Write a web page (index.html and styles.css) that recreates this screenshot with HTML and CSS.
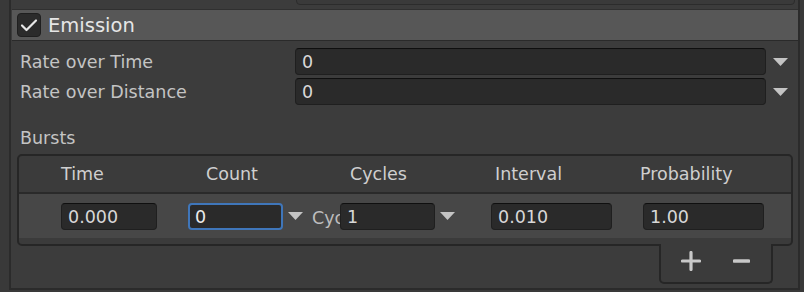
FILE: index.html
```html
<!DOCTYPE html>
<html lang="en">
<head>
  <meta charset="UTF-8">
  <title>Emission</title>
  <link rel="stylesheet" href="styles.css">
</head>
<body>
  <div class="panel">
    <div class="prev-row">
      <div class="prev-field"></div>
    </div>

    <div class="module-header">
      <span class="toggle">
        <svg width="24" height="24" viewBox="0 0 24 24"><polyline points="5,12.5 9.5,17 19,7.5" fill="none" stroke="#e8e8e8" stroke-width="2.2" stroke-linecap="round" stroke-linejoin="round"/></svg>
      </span>
      <span class="module-title">Emission</span>
    </div>

    <div class="fields">
      <div class="field-row">
        <span class="field-label">Rate over Time</span>
        <div class="input wide">0</div>
        <svg class="arrow" width="15" height="8" viewBox="0 0 15 8"><polygon points="0,0 15,0 7.5,8" fill="#c4c4c4"/></svg>
      </div>
      <div class="field-row">
        <span class="field-label">Rate over Distance</span>
        <div class="input wide">0</div>
        <svg class="arrow" width="15" height="8" viewBox="0 0 15 8"><polygon points="0,0 15,0 7.5,8" fill="#c4c4c4"/></svg>
      </div>
    </div>

    <div class="bursts-label">Bursts</div>

    <div class="bursts">
      <div class="bursts-head">
        <span class="col">Time</span>
        <span class="col col-count">Count</span>
        <span class="col">Cycles</span>
        <span class="col">Interval</span>
        <span class="col">Probability</span>
      </div>
      <div class="bursts-row">
        <div class="input cell-time">0.000</div>
        <div class="input cell-count focused">0</div>
        <svg class="arrow small" width="15" height="8" viewBox="0 0 15 8"><polygon points="0,0 15,0 7.5,8" fill="#c4c4c4"/></svg>
        <span class="clipped-label">Cycles</span>
        <div class="input cell-cycles">1</div>
        <svg class="arrow small" width="15" height="8" viewBox="0 0 15 8"><polygon points="0,0 15,0 7.5,8" fill="#c4c4c4"/></svg>
        <div class="input cell-interval">0.010</div>
        <div class="input cell-prob">1.00</div>
      </div>
      <div class="bursts-foot"></div>
    </div>

    <div class="list-buttons">
      <svg width="20" height="20" viewBox="0 0 20 20"><path d="M10 1.5v17M1.5 10h17" stroke="#c8c8c8" stroke-width="3.2" stroke-linecap="round"/></svg>
      <svg class="minus" width="17" height="20" viewBox="0 0 17 20"><path d="M1.5 10h14" stroke="#c8c8c8" stroke-width="3.6" stroke-linecap="round"/></svg>
    </div>
  </div>
</body>
</html>
```

FILE: styles.css
```css
:root {
  --color-outer: #393939;
  --color-panel: #3c3c3c;
  --color-line: #262626;
  --color-header: #575757;
  --color-field: #2a2a2a;
  --color-label: #c4c4c4;
  --color-text: #d8d8d8;
  --color-focus: #3f76ba;
}

body {
  margin: 0;
  background-color: var(--color-outer);
  font-family: "DejaVu Sans", Verdana, sans-serif;
  font-size: 17.5px;
  color: var(--color-label);
  overflow: hidden;
}

.panel {
  box-sizing: border-box;
  margin-left: 9px;
  width: 791px;
  height: 290px;
  background-color: var(--color-panel);
  border-left: 2px solid #2b2b2b;
  border-right: 2px solid #2b2b2b;
  border-bottom: 2px solid #2b2b2b;
}

.prev-row {
  height: 9px;
  overflow: hidden;
  display: flex;
  align-items: flex-end;
  padding-left: 285px;
}

.prev-field {
  flex: 1;
  height: 26px;
  margin: 0 3px 4px 0;
  background-color: #3a3a3a;
  border: 1px solid #2c2c2c;
  border-radius: 4px;
}

.module-header {
  display: flex;
  align-items: center;
  height: 30px;
  margin-left: 1px;
  padding-left: 5px;
  background-color: var(--color-header);
  border-top: 1px solid #303030;
  border-bottom: 1px solid #2a2a2a;
}

.toggle {
  box-sizing: border-box;
  width: 24px;
  height: 24px;
  display: flex;
  background-color: #2b2b2b;
  border: 1px solid #1f1f1f;
  border-radius: 4px;
}

.toggle svg {
  margin: -1px;
}

.module-title {
  margin-left: 7px;
  font-size: 19.5px;
  color: #e6e6e6;
}

.fields {
  padding-top: 7px;
}

.field-row {
  display: flex;
  align-items: center;
  height: 27px;
  margin-bottom: 3px;
  padding-left: 9px;
}

.field-label {
  width: 275px;
  white-space: nowrap;
}

.input {
  box-sizing: border-box;
  height: 27px;
  line-height: 26px;
  padding-left: 6px;
  background-color: var(--color-field);
  border: 1px solid #1f1f1f;
  border-top-color: #0f0f0f;
  border-radius: 4px;
  color: var(--color-text);
  white-space: nowrap;
}

.input.wide {
  width: 471px;
}

.arrow {
  margin-left: 7px;
}

.bursts-label {
  margin-top: 23px;
  padding-left: 9px;
  height: 20px;
  line-height: 20px;
}

.bursts {
  box-sizing: border-box;
  margin: 6px 0 0 6px;
  width: 776px;
  border: 2px solid var(--color-line);
  border-radius: 5px;
  background-color: #3b3b3b;
}

.bursts-head {
  display: flex;
  align-items: center;
  height: 36px;
  padding-left: 42px;
  border-bottom: 2px solid #2a2a2a;
  color: #cfcfcf;
}

.col {
  width: 145px;
}

.col-count {
  width: 144px;
}

.bursts-row {
  display: flex;
  align-items: center;
  height: 44px;
  padding-left: 42px;
  background-color: #474747;
}

.cell-time {
  width: 96px;
}

.cell-count {
  width: 95px;
  margin-left: 31px;
}

.input.focused {
  border: 2px solid var(--color-focus);
  padding-left: 5px;
  line-height: 24px;
  color: #ececec;
}

.arrow.small {
  margin-left: 5px;
}

.clipped-label {
  width: 28px;
  margin-left: 9px;
  overflow: hidden;
  white-space: nowrap;
  padding-top: 4px;
  color: #bdbdbd;
}

.cell-cycles {
  width: 95px;
}

.cell-interval {
  width: 121px;
  margin-left: 36px;
}

.cell-prob {
  width: 121px;
  margin-left: 31px;
}

.bursts-foot {
  height: 6px;
}

.list-buttons {
  box-sizing: border-box;
  display: flex;
  align-items: center;
  width: 114px;
  height: 40px;
  margin: -2px 0 0 648px;
  padding: 0 0 4px 20px;
  background-color: #3b3b3b;
  border: 2px solid var(--color-line);
  border-top: none;
  border-radius: 0 0 5px 5px;
}

.list-buttons .minus {
  margin-left: 32px;
}
```
